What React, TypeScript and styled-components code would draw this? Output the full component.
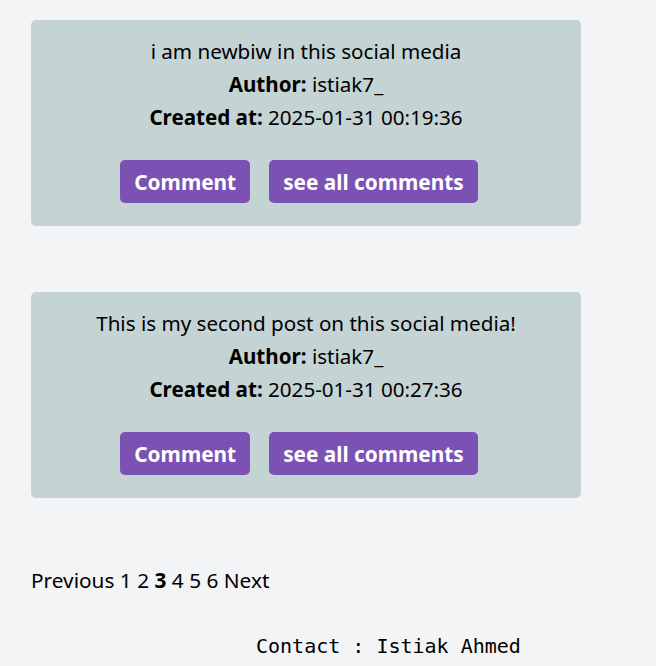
import React from "react";
import styled, { createGlobalStyle } from "styled-components";

const Global = createGlobalStyle`
  html, body { margin: 0; padding: 0; background: #f3f4f6; }
  body { font-family: "Noto Sans", "Open Sans", sans-serif; color: #000; }
`;

const Page = styled.div`
  padding: 20px 0 0 31px;
  display: flex;
  flex-direction: column;
`;

const Feed = styled.div`
  display: flex;
  flex-direction: column;
  gap: 66px;
  width: 550px;
`;

const Card = styled.div`
  background: #c4d3d4;
  border-radius: 5px;
  padding: 15px 0 23px;
  display: flex;
  flex-direction: column;
  align-items: center;
`;

const Line = styled.div`
  font-size: 20.6px;
  line-height: 33px;
  text-align: center;
`;

const Label = styled.b`
  font-weight: 700;
`;

const Actions = styled.div`
  display: flex;
  gap: 19px;
  margin-top: 26px;
  padding-right: 14px;
`;

const Button = styled.button`
  background: #7b52b4;
  color: #fff;
  border: none;
  border-radius: 5px;
  height: 43px;
  padding: 0 14px;
  font-family: inherit;
  font-size: 20.8px;
  font-weight: 700;
  cursor: pointer;
`;

const Pager = styled.div`
  margin-top: 66px;
  font-size: 20.8px;
  line-height: 33px;
  white-space: pre;
`;

const PageItem = styled.span<{ $active?: boolean }>`
  font-weight: ${(p) => (p.$active ? 700 : 400)};
`;

const Footer = styled.footer`
  margin-top: 36px;
  padding-left: 256px;
  font-family: "DejaVu Sans Mono", "Liberation Mono", monospace;
  font-size: 20px;
  line-height: 26px;
  height: 36px;
  border-bottom: 1px solid #b7b0bb;
`;

const FooterBand = styled.div`
  height: 10px;
  background: #e6dbe9;
`;

const posts = [
  { body: "i am newbiw in this social media", author: "istiak7_", created: "2025-01-31 00:19:36" },
  { body: "This is my second post on this social media!", author: "istiak7_", created: "2025-01-31 00:27:36" },
];

const pages = [1, 2, 3, 4, 5, 6];

export default function App() {
  return (
    <>
      <Global />
      <Page>
        <Feed>
          {posts.map((p, i) => (
            <Card key={i}>
              <Line>{p.body}</Line>
              <Line>
                <Label>Author:</Label> {p.author}
              </Line>
              <Line>
                <Label>Created at:</Label> {p.created}
              </Line>
              <Actions>
                <Button>Comment</Button>
                <Button>see all comments</Button>
              </Actions>
            </Card>
          ))}
        </Feed>
        <Pager>
          <PageItem>Previous</PageItem>
          {pages.map((n) => (
            <React.Fragment key={n}>
              {" "}
              <PageItem $active={n === 3}>{n}</PageItem>
            </React.Fragment>
          ))}{" "}
          <PageItem>Next</PageItem>
        </Pager>
      </Page>
      <Footer>Contact : Istiak Ahmed</Footer>
      <FooterBand />
    </>
  );
}
